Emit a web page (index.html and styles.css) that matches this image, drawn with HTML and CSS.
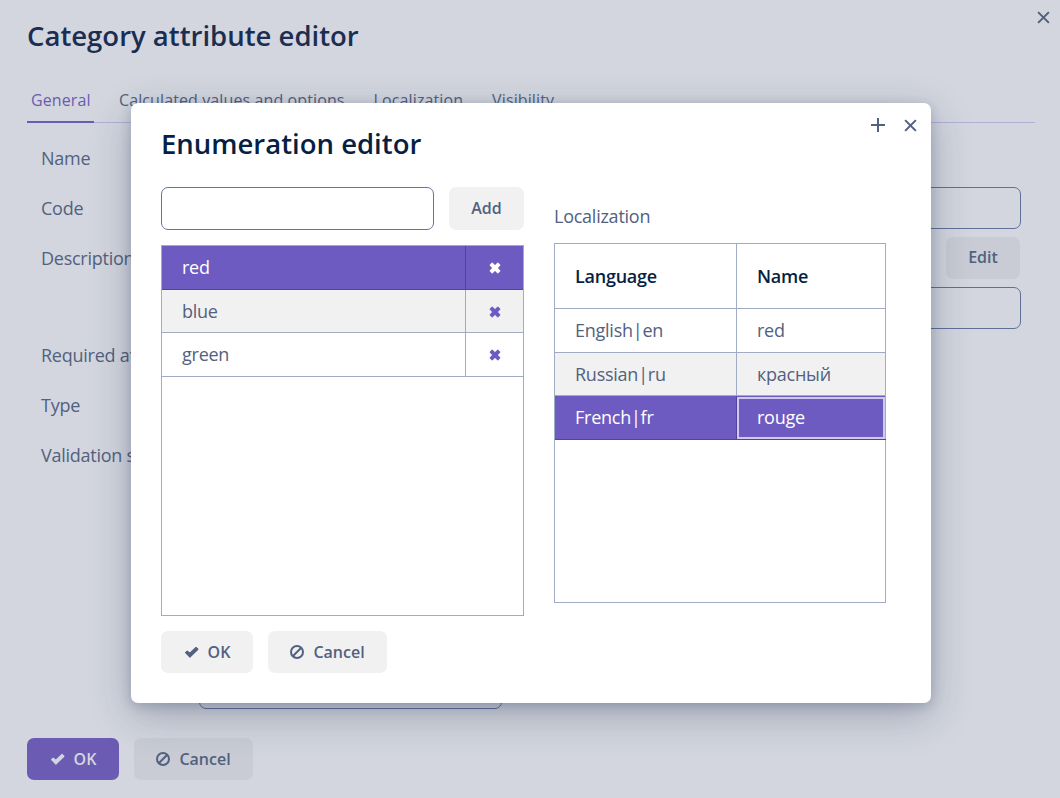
FILE: index.html
```html
<!DOCTYPE html>
<html lang="en">
<head>
<meta charset="utf-8">
<title>Category attribute editor</title>
<link rel="stylesheet" href="styles.css">
</head>
<body>
<svg class="defs" aria-hidden="true">
  <symbol id="check" viewBox="0 0 15 13"><path d="M1.6 6.6 3.2 5.2 5.9 7.2 12 1.4 13.9 3.2 5.9 11Z" fill="currentColor" stroke="currentColor" stroke-width="1.2" stroke-linejoin="round"/></symbol>
  <symbol id="ban" viewBox="0 0 14 14"><circle cx="7" cy="7" r="6" fill="none" stroke="currentColor" stroke-width="2"/><path d="M3 11 11 3" stroke="currentColor" stroke-width="2"/></symbol>
  <symbol id="times" viewBox="0 0 12 12"><path d="M3.2 1.2 6 4 8.8 1.2 10.8 3.2 8 6 10.8 8.8 8.8 10.8 6 8 3.2 10.8 1.2 8.8 4 6 1.2 3.2Z" fill="currentColor" stroke="currentColor" stroke-width="1.2" stroke-linejoin="round"/></symbol>
  <symbol id="close" viewBox="0 0 14 14"><path d="M1.2 1.2 12.8 12.8M12.8 1.2 1.2 12.8" stroke="currentColor" stroke-width="2.2"/></symbol>
  <symbol id="plus" viewBox="0 0 14 14"><path d="M7 0V14M0 7H14" stroke="currentColor" stroke-width="2"/></symbol>
</svg>

<main class="editor">
  <header class="editor-head">
    <h1 class="title">Category attribute editor</h1>
    <svg class="tool-icon editor-close"><use href="#close"/></svg>
  </header>
  <nav class="tabs">
    <span class="tab active">General</span>
    <span class="tab">Calculated values and options</span>
    <span class="tab">Localization</span>
    <span class="tab">Visibility</span>
  </nav>
  <section class="form">
    <div class="form-row"><span class="label">Name</span></div>
    <div class="form-row"><span class="label">Code</span><div class="field full"></div></div>
    <div class="form-row"><span class="label">Description</span><button class="btn edit">Edit</button></div>
    <div class="form-row tight"><span class="label"></span><div class="field full"></div></div>
    <div class="form-row"><span class="label">Required at</span></div>
    <div class="form-row"><span class="label">Type</span></div>
    <div class="form-row script"><span class="label">Validation s</span><div class="field area"></div></div>
  </section>
  <footer class="actions">
    <button class="btn primary"><svg class="icon-check"><use href="#check"/></svg>OK</button>
    <button class="btn"><svg class="icon-ban"><use href="#ban"/></svg>Cancel</button>
  </footer>
</main>

<div class="dialog">
  <header class="dialog-head">
    <h2 class="title">Enumeration editor</h2>
    <div class="tools">
      <svg class="tool-icon"><use href="#plus"/></svg>
      <svg class="tool-icon close"><use href="#close"/></svg>
    </div>
  </header>
  <div class="columns">
    <section class="values">
      <div class="add-row"><input class="input" type="text"><button class="btn add">Add</button></div>
      <div class="grid values-grid">
        <div class="row first selected"><span>red</span><span class="remove"><svg><use href="#times"/></svg></span></div>
        <div class="row short striped"><span>blue</span><span class="remove"><svg><use href="#times"/></svg></span></div>
        <div class="row"><span>green</span><span class="remove"><svg><use href="#times"/></svg></span></div>
      </div>
    </section>
    <section class="locales">
      <div class="caption">Localization</div>
      <div class="grid locales-grid">
        <div class="row head"><span>Language</span><span>Name</span></div>
        <div class="row"><span>English|en</span><span>red</span></div>
        <div class="row short striped"><span>Russian|ru</span><span>красный</span></div>
        <div class="row selected"><span>French|fr</span><span class="focused">rouge</span></div>
      </div>
    </section>
  </div>
  <footer class="actions">
    <button class="btn"><svg class="icon-check"><use href="#check"/></svg>OK</button>
    <button class="btn"><svg class="icon-ban"><use href="#ban"/></svg>Cancel</button>
  </footer>
</div>
</body>
</html>
```
FILE: styles.css
```css
* { box-sizing: border-box; }

body {
  margin: 0;
  height: 798px;
  overflow: hidden;
  position: relative;
  background: #d3d6de;
  color: #52617f;
  font: 18px/24px "Open Sans", sans-serif;
  letter-spacing: -.25px;
}

.defs { position: absolute; width: 0; height: 0; }

.title {
  margin: 0;
  font-size: 27.5px;
  line-height: 37px;
  font-weight: 600;
  letter-spacing: 0;
  color: #061f44;
}

.editor {
  height: 798px;
  padding: 0 25px 18px 27px;
  display: flex;
  flex-direction: column;
}

.editor-head { display: flex; justify-content: space-between; padding-top: 17px; height: 78px; }
.editor-head .title { color: #1b2e52; }

.tool-icon { width: 14px; height: 14px; display: block; color: #52617f; }
.editor-close { width: 13px; height: 13px; margin: -6px -15px 0 0; }

.tabs {
  height: 45px;
  flex: none;
  display: flex;
  gap: 21px;
  border-bottom: 1px solid #b2afd8;
  font-size: 16px;
  letter-spacing: .11px;
}
.tab { height: 45px; padding: 10px 4px 0; }
.tab.active { width: 67px; color: #6b5bb3; border-bottom: 2px solid #6b5bb3; }

.form { display: flex; flex-direction: column; gap: 8px; padding: 14px 14px 0; }
.form-row { display: flex; height: 42px; align-items: center; flex: none; white-space: nowrap; }
.form-row.tight { margin-bottom: -3px; }
.form-row.script { height: 275px; align-items: stretch; }
.form-row.script .label { padding-top: 9px; }
.label { width: 158px; flex: none; }
.field { border: 1px solid #5f6f98; border-radius: 7px; }
.field.full { flex: 1; height: 42px; }
.field.area { width: 303px; }

.btn {
  height: 42px;
  padding: 0 22px;
  border: 0;
  border-radius: 7px;
  background: #f1f1f2;
  color: #52617f;
  font: 600 16px/24px "Open Sans", sans-serif;
  display: flex;
  align-items: center;
  justify-content: center;
}
.editor .btn { background: #c9ccd4; }
.editor .btn.primary { background: #6b5bb3; color: #d3d6de; }
.edit { margin: 0 1px 0 auto; width: 74px; padding-bottom: 2px; }

.icon-check { width: 15px; height: 13px; margin-right: 9px; }
.icon-ban { width: 14px; height: 14px; margin-right: 9px; }

.actions { display: flex; gap: 15px; }
.actions .btn:first-child { width: 92px; }
.actions .btn:last-child { width: 119px; }
.editor .actions { margin-top: auto; }

.dialog {
  position: absolute;
  left: 131px;
  top: 103px;
  width: 800px;
  height: 600px;
  padding: 22px 45px 30px 30px;
  border-radius: 7px;
  background: #fff;
  box-shadow: 0 12px 40px rgba(25, 40, 75, .28), 0 3px 12px rgba(25, 40, 75, .2);
  display: flex;
  flex-direction: column;
}

.dialog-head { display: flex; justify-content: space-between; height: 62px; flex: none; }
.tools { display: flex; gap: 19px; margin: -7px -30.5px 0 0; }
.tools .close { width: 13px; height: 13px; margin-top: 1px; }

.columns { display: flex; gap: 30px; }
.values { width: 363px; flex: none; }
.locales { width: 332px; flex: none; }

.add-row { display: flex; gap: 15px; margin-bottom: 15px; }
.add { width: 75px; height: 43px; padding-bottom: 2px; }
.input {
  flex: 1;
  min-width: 0;
  height: 43px;
  border: 1px solid #64749a;
  border-radius: 7px;
  background: #fff;
}

.caption { height: 56px; padding-top: 17px; }

.grid { border: 1px solid #a0abc4; }
.values-grid { height: 371px; }
.locales-grid { height: 360px; }

.row { display: grid; height: 44px; }
.row.short { height: 43px; }
.values-grid .row { grid-template-columns: 303px 1fr; }
.locales-grid .row { grid-template-columns: 181px 1fr; }
.row > span {
  display: flex;
  align-items: center;
  padding: 0 0 1px 20px;
  border-bottom: 1px solid #a0abc4;
}
.row.short > span, .row.head > span { padding-bottom: 0; }
.row > span + span { border-left: 1px solid #a0abc4; }
.row.head { height: 65px; font-weight: 600; color: #061f44; }
.striped { background: #f1f1f1; }
.selected { background: #6e5bc1; color: #fff; }
.row.selected > span { border-color: #5540a8; }
.row > .remove { padding: 0; justify-content: center; color: #6e5bc1; }
.row.short > .remove { padding-top: 1px; }
.selected > .remove { color: #fff; }
.remove svg { width: 12px; height: 12px; margin-left: 1px; }
.focused { outline: 2px solid #d0c9ec; outline-offset: -3px; margin-right: -1px; }

.dialog .actions { margin-top: auto; }
```
